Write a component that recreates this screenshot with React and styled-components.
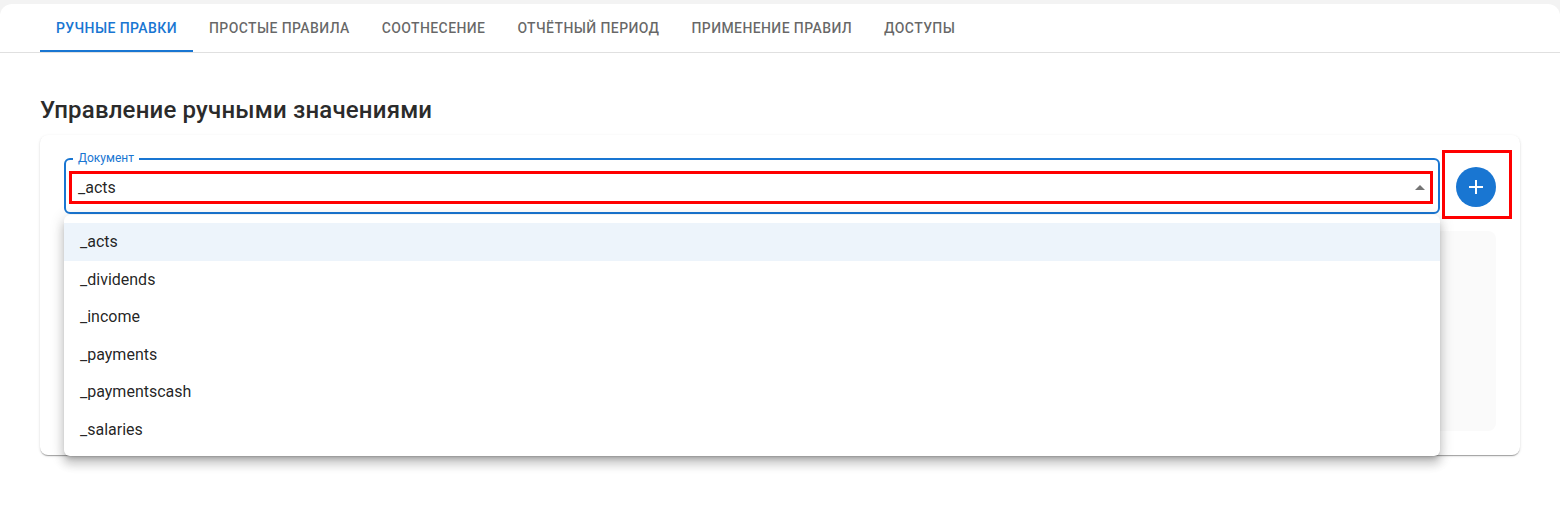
import React from "react";
import styled, { createGlobalStyle } from "styled-components";

const GlobalStyle = createGlobalStyle`
  html, body { margin: 0; padding: 0; }
  body {
    background: #f3f3f3;
    font-family: Roboto, "Noto Sans", "Liberation Sans", sans-serif;
    color: rgba(0,0,0,0.87);
  }
  * { box-sizing: border-box; }
`;

const Page = styled.div`
  margin-top: 4px;
  min-height: 513px;
  background: #fff;
  border-radius: 12px 12px 0 0;
`;

const TabBar = styled.nav`
  display: flex;
  padding: 0 40px;
  border-bottom: 1px solid #e0e0e0;
`;

const Tab = styled.button`
  position: relative;
  height: 48px;
  padding: 0 16px;
  border: none;
  background: none;
  font-family: Roboto, sans-serif;
  font-size: 14px;
  font-weight: 500;
  letter-spacing: 0.4px;
  text-transform: uppercase;
  color: ${(p) => (p.$active ? "#1976d2" : "rgba(0,0,0,0.6)")};
  cursor: pointer;
  &::after {
    content: "";
    display: ${(p) => (p.$active ? "block" : "none")};
    position: absolute;
    left: 0;
    right: 0;
    bottom: 0;
    height: 2px;
    background: #1976d2;
  }
`;

const Content = styled.main`
  padding: 41px 40px 0;
`;

const Title = styled.h1`
  margin: 0 0 9px;
  font-size: 24px;
  line-height: 32px;
  font-weight: 500;
  letter-spacing: 0.0075em;
  color: #2b2b2b;
`;

const Card = styled.section`
  display: flex;
  flex-direction: column;
  gap: 17px;
  padding: 23px 24px 24px;
  background: #fff;
  border-radius: 8px;
  box-shadow: 0 2px 1px -1px rgba(0,0,0,0.2), 0 1px 1px 0 rgba(0,0,0,0.14),
    0 1px 3px 0 rgba(0,0,0,0.12);
`;

const Row = styled.div`
  display: flex;
  align-items: flex-start;
  gap: 16px;
`;

const FieldWrap = styled.div`
  position: relative;
  flex: 1;
`;

const Field = styled.div`
  position: relative;
  height: 56px;
  padding: 11px 5px 8px 3px;
  border: 2px solid #1976d2;
  border-radius: 6px;
`;

const FieldLabel = styled.span`
  position: absolute;
  top: -10px;
  left: 7px;
  padding: 0 5px;
  background: #fff;
  font-size: 12px;
  line-height: 16px;
  color: #1976d2;
`;

const InputBox = styled.div`
  display: flex;
  align-items: center;
  height: 33px;
  padding: 0 6px;
  border: 3px solid #ff0000;
  font-size: 16px;
  color: rgba(0,0,0,0.87);
`;

const InputText = styled.span`
  flex: 1;
`;

const PopupIcon = styled.svg`
  flex: none;
  margin-right: -8px;
`;

const Menu = styled.ul`
  position: absolute;
  z-index: 5;
  top: calc(100% + 1px);
  left: 0;
  right: 0;
  margin: 0;
  padding: 8px 0;
  list-style: none;
  background: #fff;
  border-radius: 6px;
  box-shadow: 0 5px 5px -3px rgba(0,0,0,0.2), 0 8px 10px 1px rgba(0,0,0,0.14),
    0 3px 14px 2px rgba(0,0,0,0.12);
`;

const Option = styled.li`
  display: flex;
  align-items: center;
  height: 37.5px;
  padding: 0 16px;
  font-size: 16px;
  color: rgba(0,0,0,0.87);
  background: ${(p) => (p.$selected ? "rgba(25,118,210,0.08)" : "transparent")};
`;

const AddWrap = styled.div`
  position: relative;
  margin-top: 9px;
`;

const AddButton = styled.button`
  display: flex;
  align-items: center;
  justify-content: center;
  width: 40px;
  height: 40px;
  padding: 0;
  border: none;
  border-radius: 50%;
  background: #1976d2;
  cursor: pointer;
`;

const Highlight = styled.span`
  position: absolute;
  top: -17px;
  left: -14px;
  right: -16px;
  bottom: -12px;
  border: 3px solid #ff0000;
  pointer-events: none;
`;

const Placeholder = styled.div`
  height: 200px;
  background: #fafafa;
  border-radius: 8px;
`;

const tabs = [
  "Ручные правки",
  "Простые правила",
  "Соотнесение",
  "Отчётный период",
  "Применение правил",
  "Доступы",
];

const options = ["_acts", "_dividends", "_income", "_payments", "_paymentscash", "_salaries"];

export default function App() {
  return (
    <>
      <GlobalStyle />
      <Page>
        <TabBar>
          {tabs.map((t, i) => (
            <Tab key={t} $active={i === 0}>
              {t}
            </Tab>
          ))}
        </TabBar>
        <Content>
          <Title>Управление ручными значениями</Title>
          <Card>
            <Row>
              <FieldWrap>
                <Field>
                  <FieldLabel>Документ</FieldLabel>
                  <InputBox>
                    <InputText>_acts</InputText>
                    <PopupIcon width="24" height="24" viewBox="0 0 24 24">
                      <path d="M7 14l5-5 5 5z" fill="rgba(0,0,0,0.54)" />
                    </PopupIcon>
                  </InputBox>
                </Field>
                <Menu>
                  {options.map((o, i) => (
                    <Option key={o} $selected={i === 0}>
                      {o}
                    </Option>
                  ))}
                </Menu>
              </FieldWrap>
              <AddWrap>
                <AddButton aria-label="Добавить">
                  <svg width="24" height="24" viewBox="0 0 24 24">
                    <path d="M19 13h-6v6h-2v-6H5v-2h6V5h2v6h6z" fill="#fff" />
                  </svg>
                </AddButton>
                <Highlight />
              </AddWrap>
            </Row>
            <Placeholder />
          </Card>
        </Content>
      </Page>
    </>
  );
}
